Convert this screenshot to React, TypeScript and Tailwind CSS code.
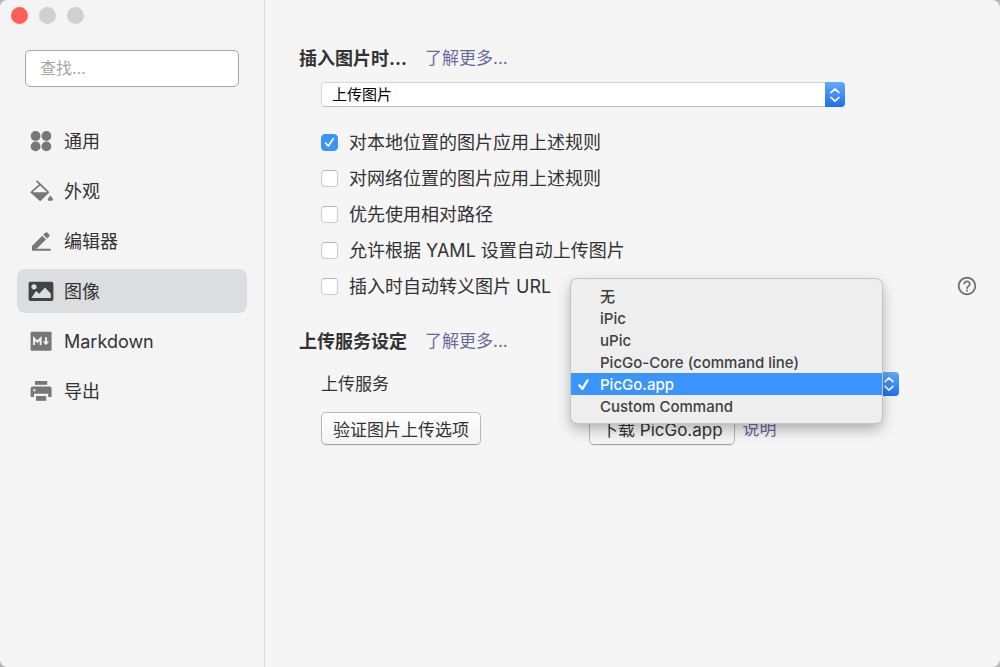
import type { ReactNode } from "react";

const navItems: { label: string; icon: ReactNode }[] = [
  {
    label: "通用",
    icon: (
      <>
        <circle cx="7.6" cy="8" r="4.9" />
        <circle cx="18.4" cy="8" r="4.9" />
        <circle cx="7.6" cy="18.4" r="4.9" />
        <circle cx="18.4" cy="18.4" r="4.9" />
      </>
    ),
  },
  {
    label: "外观",
    icon: (
      <>
        <path d="M8.6 2.8 20.2 14.2 12.2 22 3.4 14.2 12.2 6.4" fill="none" stroke="currentColor" strokeWidth="1.8" />
        <path d="M3.2 14.2H21L13.4 21.8Q12.2 22.8 11 21.8Z" />
        <path d="M22.4 17.4Q25 20.4 25 21.4 25 22.8 23.6 22.8H21.2Q19.8 22.8 19.8 21.4 19.8 20.4 22.4 17.4Z" />
      </>
    ),
  },
  {
    label: "编辑器",
    icon: (
      <>
        <path d="M4 18 14.2 7.8 18 11.6 7.8 21.4H4Z" />
        <path d="M15.2 6.8 17.4 4.6Q18.3 3.8 19.2 4.6L21.2 6.6Q22 7.5 21.2 8.4L19 10.6Z" />
        <path d="M4 20.8H22.6V22.8H4Z" />
      </>
    ),
  },
  {
    label: "图像",
    icon: (
      <path
        fillRule="evenodd"
        d="M2.5 3.8H23.5Q25.4 3.8 25.4 5.7V21Q25.4 22.9 23.5 22.9H2.5Q.6 22.9 .6 21V5.7Q.6 3.8 2.5 3.8ZM6 6.2A2.6 2.6 0 1 0 6 11.4 2.6 2.6 0 1 0 6 6.2ZM3.4 20H22.8V15.8L17 9.6 11.2 15.8 8 13Z"
      />
    ),
  },
  {
    label: "Markdown",
    icon: (
      <>
        <rect x="2.6" y="3.8" width="21" height="19" rx="1.2" />
        <path d="M6 17V10.3L9.3 13.8 12.6 10.3V17M18 9.3V14.5" fill="none" stroke="#f4f4f4" strokeWidth="1.9" />
        <path d="M14.9 13.6H21.1L18 17.2Z" fill="#f4f4f4" />
      </>
    ),
  },
  {
    label: "导出",
    icon: (
      <>
        <path d="M7 3H19.2V6.8H7Z" />
        <path
          fillRule="evenodd"
          d="M5 8.6H21.4Q23.6 8.6 23.6 10.8V19H20.2V15.8H6V19H2.6V10.8Q2.6 8.6 5 8.6ZM5.2 11.2V13.2H7.4V11.2Z"
        />
        <path d="M8 18H18.2V22.8H8Z" />
      </>
    ),
  },
];

const rules = [
  "对本地位置的图片应用上述规则",
  "对网络位置的图片应用上述规则",
  "优先使用相对路径",
  "允许根据 YAML 设置自动上传图片",
  "插入时自动转义图片 URL",
];

const services = ["无", "iPic", "uPic", "PicGo-Core (command line)", "PicGo.app", "Custom Command"];

function Stepper() {
  return (
    <span className="pointer-events-none absolute inset-y-0 right-0 flex w-5 items-center justify-center rounded-r bg-linear-to-b from-[#62a9fa] to-[#1a70f0]">
      <svg viewBox="0 0 12 18" className="h-[18px] w-3" fill="none" stroke="white" strokeWidth="1.6" strokeLinecap="round" strokeLinejoin="round">
        <path d="M2 6.6 6 2.8 10 6.6M2 11.4 6 15.2 10 11.4" />
      </svg>
    </span>
  );
}

function Sidebar() {
  return (
    <aside className="w-[265px] shrink-0 border-r border-[#dcdcdc] bg-[#f4f4f4]">
      <div className="flex gap-[11px] px-[11px] pt-[7px]">
        <button aria-label="关闭" className="size-[17px] rounded-full bg-[#ff5f57]" />
        <button aria-label="最小化" className="size-[17px] rounded-full bg-[#d0d0d0]" />
        <button aria-label="缩放" className="size-[17px] rounded-full bg-[#d0d0d0]" />
      </div>
      <div className="px-[25px] pt-[26px]">
        <input
          type="search"
          aria-label="查找"
          placeholder="查找..."
          className="block h-[37px] w-full rounded-[5px] border border-[#a8a8a8] bg-white px-3.5 pb-0.5 text-base outline-none placeholder:text-[#a6a6a6]"
        />
      </div>
      <nav className="flex flex-col gap-1.5 px-[17px] pt-8">
        {navItems.map(({ label, icon }) => {
          const active = label === "图像";
          return (
            <a
              key={label}
              href="#"
              aria-current={active ? "page" : undefined}
              className={`flex h-11 items-center gap-2.5 rounded-lg px-[11px] text-lg ${active ? "bg-[#dcdddf]" : ""}`}
            >
              <svg viewBox="0 0 26 26" fill="currentColor" className={`size-[26px] ${active ? "text-[#434343]" : "text-[#777777]"}`}>
                {icon}
              </svg>
              <span className="pt-0.5">{label}</span>
            </a>
          );
        })}
      </nav>
    </aside>
  );
}

function SectionTitle({ title }: { title: string }) {
  return (
    <div className="flex h-7 items-center gap-[18px] pt-0.5">
      <h2 className="text-lg font-bold">{title}</h2>
      <a href="#" className="text-[17px] text-[#6a699f]">了解更多...</a>
    </div>
  );
}

const buttonStyle =
  "h-[33px] rounded-[5px] border border-[#bababa] border-b-[#a0a0a0] bg-linear-to-b from-white to-[#f3f3f3] px-[11px] pt-0.5 text-[17px] leading-6 whitespace-nowrap shadow-xs";

export default function App() {
  return (
    <div className="min-h-screen bg-[#b8b8b8] font-['Inter','Noto_Sans_CJK_SC',sans-serif] text-[#333333]">
      <div className="flex min-h-screen overflow-hidden rounded-lg bg-[#f5f5f5]">
        <Sidebar />
        <main className="min-w-0 flex-1 pt-11 pr-[22px] pb-8 pl-[34px]">
          <section>
            <SectionTitle title="插入图片时..." />
            <div className="pt-2.5 pl-[22px]">
              <div className="relative h-[25px] max-w-[524px]">
                <select
                  aria-label="插入图片时"
                  className="block size-full appearance-none rounded border border-[#d6d6d6] border-b-[#bebebe] bg-white px-2.5 text-[15px] leading-5 text-black"
                >
                  <option>上传图片</option>
                </select>
                <Stepper />
              </div>
              <div className="pt-[17px]">
                {rules.map((rule, index) => (
                  <div key={rule} className="flex h-9 items-center justify-between">
                    <label className="flex items-center gap-[11px] text-lg">
                      <span className="relative flex size-[17px]">
                        <input
                          type="checkbox"
                          defaultChecked={index === 0}
                          className="peer size-full appearance-none rounded border border-[#cbcbcb] border-t-[#b4b4b4] bg-white checked:border-[#3a94fb] checked:bg-[#3a94fb]"
                        />
                        <svg viewBox="0 0 17 17" className="pointer-events-none absolute inset-0 hidden peer-checked:block" fill="none" stroke="white" strokeWidth="1.8" strokeLinecap="round" strokeLinejoin="round">
                          <path d="M4.6 9.2 7.3 12 12.3 4.8" />
                        </svg>
                      </span>
                      <span className="pt-0.5">{rule}</span>
                    </label>
                    {index === rules.length - 1 && (
                      <button aria-label="帮助">
                        <svg viewBox="0 0 24 24" className="size-[22px]" fill="#747474">
                          <path d="M11 18h2v-2h-2v2zm1-16C6.48 2 2 6.48 2 12s4.48 10 10 10 10-4.48 10-10S17.52 2 12 2zm0 18c-4.41 0-8-3.59-8-8s3.59-8 8-8 8 3.59 8 8-3.59 8-8 8zm0-14c-2.21 0-4 1.79-4 4h2c0-1.1.9-2 2-2s2 .9 2 2c0 2-3 1.75-3 5h2c0-2.25 3-2.5 3-5 0-2.21-1.79-4-4-4z" />
                        </svg>
                      </button>
                    )}
                  </div>
                ))}
              </div>
            </div>
          </section>

          <section className="pt-[23px]">
            <SectionTitle title="上传服务设定" />
            <div className="grid grid-cols-[268px_1fr] items-center gap-y-4 pt-[17px] pl-[22px]">
              <label htmlFor="service" className="text-[17px] leading-6">上传服务</label>
              <div className="relative h-6 max-w-[310px]">
                <select
                  id="service"
                  defaultValue="PicGo.app"
                  className="block size-full appearance-none rounded border border-[#d6d6d6] bg-white px-2.5 text-[15px] leading-5"
                >
                  {services.map((service) => (
                    <option key={service}>{service}</option>
                  ))}
                </select>
                <Stepper />
                <ul
                  role="listbox"
                  aria-label="上传服务"
                  className="absolute -top-[93px] -left-[18px] z-10 w-[311px] rounded-md bg-[#eeeeee] py-1.5 text-[15px] font-medium shadow-[0_0_0_1px_#c4c4c4,0_6px_14px_rgba(0,0,0,0.3)]"
                >
                  {services.map((service) => {
                    const selected = service === "PicGo.app";
                    return (
                      <li
                        key={service}
                        role="option"
                        aria-selected={selected}
                        className={`flex h-[22px] items-center gap-1.5 px-1.5 ${selected ? "bg-[#3a95fd] text-white" : "text-[#404040]"}`}
                      >
                        <svg viewBox="0 0 17 17" className="size-[17px]" fill="none" stroke={selected ? "white" : "none"} strokeWidth="2.4" strokeLinecap="round" strokeLinejoin="round">
                          <path d="M2.4 9.4 5.4 12.8 10.6 4.4" />
                        </svg>
                        <span className="pt-0.5">{service}</span>
                      </li>
                    );
                  })}
                </ul>
              </div>
              <div>
                <button className={buttonStyle}>验证图片上传选项</button>
              </div>
              <div className="flex items-center gap-2">
                <button className={buttonStyle}>下载 PicGo.app</button>
                <a href="#" className="pt-0.5 text-[17px] text-[#6a699f]">说明</a>
              </div>
            </div>
          </section>
        </main>
      </div>
    </div>
  );
}
